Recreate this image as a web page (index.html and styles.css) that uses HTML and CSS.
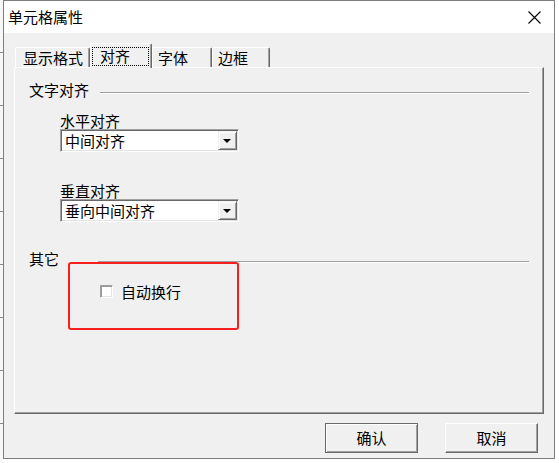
FILE: index.html
```html
<!DOCTYPE html>
<html lang="zh-CN">
<head>
<meta charset="utf-8">
<title>单元格属性</title>
<link rel="stylesheet" href="styles.css">
</head>
<body>
<div class="backdrop"></div>
<div class="dialog">
  <div class="titlebar">
    <span class="title">单元格属性</span>
    <svg class="close" width="13" height="13" viewBox="0 0 13 13"><path d="M0.5 0.5 L12.5 12.5 M12.5 0.5 L0.5 12.5" stroke="#000" stroke-width="1.1" fill="none"/></svg>
  </div>
  <div class="tabs">
    <div class="tab tab-1">显示格式</div>
    <div class="tab tab-active"><span class="focus">对齐</span></div>
    <div class="tab tab-3">字体</div>
    <div class="tab tab-4">边框</div>
  </div>
  <div class="panel">
    <div class="group-head">
      <span class="group-label">文字对齐</span>
      <span class="group-line"></span>
    </div>
    <div class="field field-first">
      <div class="field-label">水平对齐</div>
      <div class="combo"><span class="combo-text">中间对齐</span><span class="combo-btn"><span class="arrow"></span></span></div>
    </div>
    <div class="field field-second">
      <div class="field-label">垂直对齐</div>
      <div class="combo"><span class="combo-text">垂向中间对齐</span><span class="combo-btn"><span class="arrow"></span></span></div>
    </div>
    <div class="group-head group-head-2">
      <span class="group-label group-label-wide">其它</span>
      <span class="group-line"></span>
    </div>
    <div class="check-row">
      <span class="checkbox"></span>
      <span class="check-text">自动换行</span>
    </div>
    <div class="highlight"></div>
  </div>
  <div class="buttons">
    <div class="btn btn-default">确认</div>
    <div class="btn">取消</div>
  </div>
</div>
</body>
</html>
```
FILE: styles.css
```css
* { box-sizing: border-box; }
html, body { margin: 0; padding: 0; }
body {
  width: 559px;
  height: 463px;
  overflow: hidden;
  background: #fff;
  display: flex;
  align-items: flex-start;
  font-family: "Noto Sans CJK SC", "Microsoft YaHei", sans-serif;
  font-size: 15px;
  color: #000;
}
.backdrop {
  flex: none;
  width: 3px;
  height: 463px;
  background: repeating-linear-gradient(to bottom, #f7f7f7 0 52px, #8a8a8a 52px 53px);
}
.dialog {
  flex: none;
  width: 552px;
  height: 459px;
  border: 1px solid #7e7e7e;
  background: #f0f0f0;
  display: flex;
  flex-direction: column;
}
.titlebar {
  height: 32px;
  background: #fff;
  display: flex;
  align-items: center;
  justify-content: space-between;
  padding: 0 13px 0 4px;
  line-height: 20px;
}
.close { display: block; }
.tabs {
  position: relative;
  z-index: 2;
  display: flex;
  align-items: flex-end;
  height: 25px;
  margin: 10px 0 -1px 11px;
  line-height: 19px;
}
.tab {
  height: 20px;
  margin-bottom: 1px;
  border-top: 1px solid #fff;
  border-left: 1px solid #fff;
  border-right: 1px solid #696969;
  box-shadow: inset -1px 0 #a0a0a0;
  border-radius: 2px 2px 0 0;
  padding-left: 7px;
  white-space: nowrap;
}
.tab-1 { width: 75px; }
.tab-3 { width: 60px; padding-left: 5px; }
.tab-4 { width: 58px; padding-left: 5px; }
.tab-active {
  width: 62px;
  height: 25px;
  margin-bottom: 0;
  background: #f0f0f0;
  padding: 3px 2px 0 1px;
}
.focus {
  display: block;
  height: 19px;
  border: 1px dotted #000;
  padding-left: 7px;
  line-height: 16px;
}
.panel {
  position: relative;
  height: 347px;
  margin: 0 10px;
  border-top: 1px solid #fff;
  border-left: 1px solid #fff;
  border-right: 1px solid #696969;
  border-bottom: 1px solid #696969;
  box-shadow: inset -1px -1px #a0a0a0;
  padding: 12px 14px 0 14px;
}
.group-head {
  display: flex;
  align-items: center;
  height: 20px;
  line-height: 20px;
}
.group-head-2 { margin-top: 27px; }
.group-label { margin-right: 11px; white-space: nowrap; }
.group-label-wide { margin-right: 39px; }
.group-line {
  flex: 1;
  height: 2px;
  margin-top: 6px;
  border-top: 1px solid #a0a0a0;
  border-bottom: 1px solid #fff;
}
.field { padding-left: 31px; }
.field-first { margin-top: 12px; }
.field-second { margin-top: 30px; }
.field-label { line-height: 17px; height: 17px; }
.combo {
  width: 179px;
  height: 23px;
  display: flex;
  border-top: 1px solid #a0a0a0;
  border-left: 1px solid #a0a0a0;
  border-right: 1px solid #fff;
  border-bottom: 1px solid #fff;
  box-shadow: inset 1px 1px #696969, inset -1px -1px #e3e3e3;
  background: #fff;
  padding: 1px;
}
.combo-text {
  flex: 1;
  line-height: 19px;
  padding-left: 3px;
  white-space: nowrap;
}
.combo-btn {
  width: 19px;
  height: 19px;
  background: #f0f0f0;
  border-top: 1px solid #f0f0f0;
  border-left: 1px solid #f0f0f0;
  border-right: 1px solid #696969;
  border-bottom: 1px solid #696969;
  box-shadow: inset 1px 1px #fff, inset -1px -1px #a0a0a0;
  display: flex;
  align-items: center;
  justify-content: center;
}
.arrow {
  width: 0;
  height: 0;
  border-left: 4px solid transparent;
  border-right: 4px solid transparent;
  border-top: 4px solid #000;
  margin-left: -1px;
}
.check-row {
  display: flex;
  align-items: center;
  margin-top: 14px;
  padding-left: 71px;
  height: 17px;
  line-height: 17px;
}
.checkbox {
  width: 13px;
  height: 13px;
  background: #fff;
  border-top: 1px solid #a0a0a0;
  border-left: 1px solid #a0a0a0;
  border-right: 1px solid #fff;
  border-bottom: 1px solid #fff;
  box-shadow: inset 1px 1px #9a9a9a, inset -1px -1px #e3e3e3;
  margin-right: 8px;
}
.highlight {
  position: absolute;
  left: 53px;
  top: 194px;
  width: 171px;
  height: 68px;
  border: 2px solid #fb1e1e;
  border-radius: 3px;
}
.buttons {
  display: flex;
  justify-content: flex-end;
  gap: 27px;
  margin-top: 9px;
  padding-right: 16px;
}
.btn {
  width: 93px;
  height: 30px;
  border-top: 1px solid #fff;
  border-left: 1px solid #fff;
  border-right: 1px solid #696969;
  border-bottom: 1px solid #696969;
  box-shadow: inset -1px -1px #a0a0a0;
  text-align: center;
  line-height: 28px;
  background: #f0f0f0;
}
.btn-default {
  border: 1px solid #696969;
  box-shadow: inset 1px 1px #fff, inset -1px -1px #a0a0a0;
}
```
